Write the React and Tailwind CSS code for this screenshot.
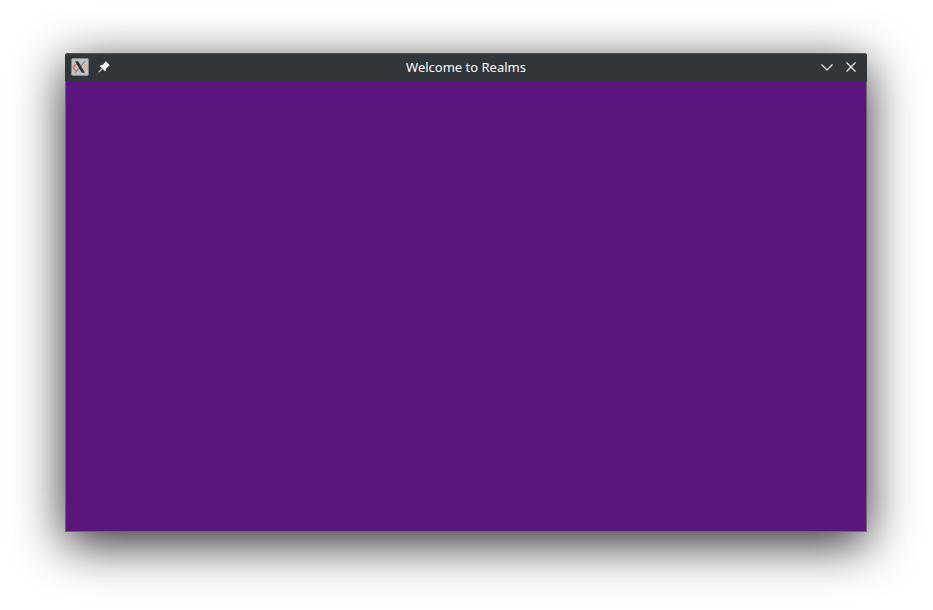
import React from "react";

function XIcon() {
  return (
    <svg width="18" height="18" viewBox="0 0 18 18" className="block shrink-0">
      <rect x="0.6" y="0.6" width="16.8" height="16.8" rx="1" fill="#bdc3c7" stroke="#969ca0" strokeWidth="0.6" />
      <path d="M14 3.3 L4.2 14.7" stroke="#6a6f72" strokeWidth="1" fill="none" />
      <path d="M6.5 6.2 C2.6 6.4 1.8 9.2 3.4 11.4 C4.2 12.6 5.2 13.2 6.4 13.4" fill="none" stroke="#f0693c" strokeWidth="1.3" />
      <path d="M6.4 13.4 C9.5 14.2 15.2 12.6 15.8 9.8 C16.1 8.2 15 6.8 13 6.4" fill="none" stroke="#e9a765" strokeWidth="1" />
      <path d="M4 3.3 H7.2 L14 14.7 H10.8 Z" fill="#2f3336" />
    </svg>
  );
}

function PinIcon() {
  return (
    <svg width="12" height="12" viewBox="0 0 12 12" className="block shrink-0" fill="#fcfcfc">
      <path d="M7.8 0.3 L11.7 4.2 L10.7 5.3 L10.3 5.3 L7.7 7.9 L8 9.2 L7 10.2 L4.7 7.9 L1.1 11.5 L0.4 10.9 L4 7.2 L1.8 5 L2.8 4 L4.2 4.3 L6.8 1.7 L6.8 1.3 Z" />
    </svg>
  );
}

export default function App() {
  return (
    <div className="flex h-[610px] w-[933px] overflow-hidden bg-white pl-[65px] pt-[53px]">
      <div className="flex h-[479px] w-[802px] flex-col rounded-t-[3px] bg-[#31363b] shadow-[0_12px_50px_rgba(0,0,0,0.83)]">
        <header className="flex h-7 shrink-0 items-center rounded-t-[3px] border-t border-[#51565a] bg-[#31363b] pb-px pl-1.5 pr-2.5">
          <div className="flex w-[60px] items-center gap-[9px]">
            <XIcon />
            <PinIcon />
          </div>
          <h1 className="flex-1 pl-1 text-center font-['Noto_Sans',sans-serif] text-[13px] leading-[18px] text-[#fcfcfc]">
            Welcome to Realms
          </h1>
          <div className="flex w-[60px] items-center justify-end gap-3">
            <svg width="12" height="12" viewBox="0 0 12 12" className="block" fill="none" stroke="#fcfcfc" strokeWidth="1.1">
              <path d="M0.5 3.5 L6 9 L11.5 3.5" />
            </svg>
            <svg width="12" height="12" viewBox="0 0 12 12" className="block" fill="none" stroke="#fcfcfc" strokeWidth="1.1">
              <path d="M1.5 1.5 L10.5 10.5 M10.5 1.5 L1.5 10.5" />
            </svg>
          </div>
        </header>
        <main className="flex-1 border-x border-b border-[#68686a] bg-[#5b167e]" />
      </div>
    </div>
  );
}
